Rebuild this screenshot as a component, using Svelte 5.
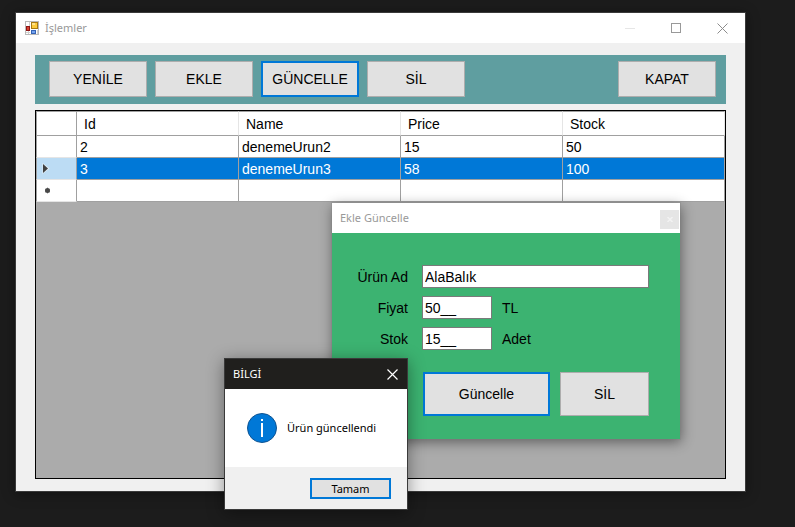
<script>
  const columns = ['Id', 'Name', 'Price', 'Stock'];
  const rows = [
    { id: 2, cells: ['2', 'denemeUrun2', '15', '50'] },
    { id: 3, cells: ['3', 'denemeUrun3', '58', '100'] }
  ];
  let selected = $state(3);
  let name = $state('AlaBalık');
  let price = $state('50__');
  let stock = $state('15__');
</script>

<div class="desktop">
  <main class="window">
    <header class="titlebar">
      <svg class="app-icon" width="14" height="14" viewBox="0 0 14 14" shape-rendering="crispEdges" aria-hidden="true">
        <rect x="0.5" y="0.5" width="13" height="13" fill="#fff" stroke="#b9b9b9" />
        <path d="M3.500 10v3M1 11.500h4M12.500 9v4M4.500 1v4" stroke="#d0d0d0" fill="none" />
        <rect x="6" y="1" width="7" height="7" fill="#a87a10" />
        <rect x="7" y="2" width="5" height="5" fill="#fccb3c" />
        <rect x="7" y="2" width="3" height="2" fill="#ffe38a" />
        <rect x="1" y="5" width="4" height="5" fill="#8e1616" />
        <rect x="2" y="6" width="2" height="3" fill="#d9402e" />
        <rect x="6" y="9" width="5" height="4" fill="#3563b5" />
        <rect x="7" y="10" width="3" height="2" fill="#74a4f0" />
      </svg>
      <h1>İşlemler</h1>
      <div class="caption-buttons">
        <button aria-label="Simge durumuna küçült">
          <svg width="10" height="10" viewBox="0 0 10 10"><path d="M0 5.500h10" stroke="#e6e6e6" /></svg>
        </button>
        <button aria-label="Ekranı kapla">
          <svg width="10" height="10" viewBox="0 0 10 10"><rect x="0.5" y="0.5" width="9" height="9" fill="none" stroke="#999" /></svg>
        </button>
        <button aria-label="Kapat">
          <svg width="11" height="11" viewBox="0 0 11 11"><path d="M0.500 0.500l10 10M10.500 0.500l-10 10" stroke="#8c8c8c" /></svg>
        </button>
      </div>
    </header>

    <div class="content">
      <nav class="toolbar">
        <button class="btn">YENİLE</button>
        <button class="btn">EKLE</button>
        <button class="btn active">GÜNCELLE</button>
        <button class="btn">SİL</button>
        <button class="btn last">KAPAT</button>
      </nav>

      <div class="grid">
        <table>
          <thead>
            <tr>
              <th class="marker"></th>
              {#each columns as column}
                <th>{column}</th>
              {/each}
            </tr>
          </thead>
          <tbody>
            {#each rows as row (row.id)}
              <tr class:selected={row.id === selected} onclick={() => (selected = row.id)}>
                <td class="marker">
                  {#if row.id === selected}
                    <svg width="8" height="11" viewBox="0 0 8 11"><path d="M0.500 0v11l7-5.500z" fill="#e4eef6" /><path d="M1 1v9l5-4.500z" fill="#404040" /></svg>
                  {/if}
                </td>
                {#each row.cells as cell}
                  <td>{cell}</td>
                {/each}
              </tr>
            {/each}
            <tr>
              <td class="marker">
                <svg class="new-row" width="7" height="7" viewBox="0 0 7 7"><path d="M3.500 0.500v6M1 2l5 3M6 2l-5 3" stroke="#999" /><circle cx="3.500" cy="3.500" r="2.500" fill="#484848" /></svg>
              </td>
              {#each columns as column}
                <td></td>
              {/each}
            </tr>
          </tbody>
        </table>
      </div>
    </div>
  </main>

  <section class="editor" aria-labelledby="editor-title">
    <header class="titlebar">
      <h2 id="editor-title">Ekle Güncelle</h2>
      <button class="tool-close" aria-label="Kapat">
        <svg width="6" height="5" viewBox="0 0 6 5"><path d="M0.500 0l5 5M5.500 0l-5 5" stroke="#f2f2f2" stroke-width="1.500" /></svg>
      </button>
    </header>
    <form onsubmit={(e) => e.preventDefault()}>
      <div class="field">
        <label for="name">Ürün Ad</label>
        <input id="name" class="wide" bind:value={name} />
      </div>
      <div class="field">
        <label for="price">Fiyat</label>
        <input id="price" bind:value={price} />
        <span>TL</span>
      </div>
      <div class="field">
        <label for="stock">Stok</label>
        <input id="stock" bind:value={stock} />
        <span>Adet</span>
      </div>
      <div class="actions">
        <button class="btn active update">Güncelle</button>
        <button class="btn remove" type="button">SİL</button>
      </div>
    </form>
  </section>

  <section class="message" role="alertdialog" aria-labelledby="message-title" aria-describedby="message-text">
    <header class="titlebar dark">
      <h2 id="message-title">BİLGİ</h2>
      <button class="message-close" aria-label="Kapat">
        <svg width="11" height="11" viewBox="0 0 11 11"><path d="M0.500 0.500l10 10M10.500 0.500l-10 10" stroke="#fff" stroke-width="1.200" /></svg>
      </button>
    </header>
    <div class="message-body">
      <svg width="30" height="30" viewBox="0 0 30 30" aria-hidden="true">
        <circle cx="15" cy="15" r="14.500" fill="#0078d7" stroke="#0f5391" />
        <rect x="14" y="6" width="2" height="2" fill="#fff" />
        <rect x="14" y="10" width="2" height="14" fill="#fff" />
      </svg>
      <p id="message-text">Ürün güncellendi</p>
    </div>
    <footer>
      <button class="btn active ok">Tamam</button>
    </footer>
  </section>
</div>

<style>
  :global(body) {
    margin: 0;
    background: #1c1c1c;
  }
  .desktop {
    position: relative;
    display: flex;
    box-sizing: border-box;
    min-height: 100vh;
    padding: 12px 49px 35px 15px;
    background: #1c1c1c;
    font: 14px/20px 'Liberation Sans', Arial, sans-serif;
    color: #000;
  }
  button,
  input {
    box-sizing: border-box;
    margin: 0;
    font: inherit;
    color: inherit;
  }
  svg {
    display: block;
  }
  h1,
  h2,
  p,
  .ok {
    margin: 0;
    font: 11px/16px 'Noto Sans', 'Open Sans', sans-serif;
    white-space: nowrap;
  }
  .window {
    flex: 1;
    display: flex;
    flex-direction: column;
    border: 1px solid #3a3a3a;
    background: #f0f0f0;
    box-shadow: 0 2px 12px rgba(0, 0, 0, 0.4);
  }
  .titlebar {
    display: flex;
    align-items: center;
    height: 30px;
    padding-left: 8px;
    background: #fff;
    color: #999;
  }
  .window > .titlebar {
    gap: 6px;
    padding-left: 9px;
  }
  .caption-buttons {
    display: flex;
    margin-left: auto;
  }
  .caption-buttons button {
    display: grid;
    place-items: center;
    width: 46px;
    height: 28px;
    padding: 0;
    border: 0;
    background: none;
  }
  .content {
    flex: 1;
    display: flex;
    flex-direction: column;
    gap: 6px;
    padding: 12px 19px;
  }
  .toolbar {
    display: flex;
    gap: 8px;
    padding: 6px 10px 7px 14px;
    background: #5f9ea0;
  }
  .btn {
    width: 98px;
    height: 36px;
    padding: 0;
    border: 1px solid #adadad;
    border-radius: 0;
    background: #e1e1e1;
  }
  .btn.active {
    border: 2px solid #0078d7;
  }
  .last {
    margin-left: auto;
  }
  .grid {
    flex: 1;
    border: 1px solid #000;
    background: #ababab;
  }
  table {
    width: 100%;
    table-layout: fixed;
    border-collapse: separate;
    border-spacing: 0;
    background: #fff;
  }
  th,
  td {
    box-sizing: border-box;
    height: 22px;
    padding: 0 3px;
    border: solid #a0a0a0;
    border-width: 0 1px 1px 0;
    text-align: left;
    font-weight: normal;
  }
  th {
    height: 25px;
    padding: 0 7px;
    border-top-width: 1px;
    border-right-color: #e5e5e5;
  }
  .marker {
    width: 41px;
    padding: 0 0 0 5px;
    border-left-width: 1px;
    border-right-color: #a0a0a0;
  }
  td.marker {
    border-bottom-color: #e5e5e5;
  }
  .new-row {
    margin-left: 2px;
  }
  .selected td {
    background: #0078d7;
    color: #fff;
  }
  .selected .marker {
    background: #bcdcf4;
  }
  .editor {
    position: absolute;
    left: 332px;
    top: 203px;
    width: 348px;
    background: #3cb371;
    box-shadow: 0 0 0 1px rgba(130, 130, 130, 0.3), 1px 3px 12px rgba(0, 0, 0, 0.45);
  }
  .tool-close {
    display: grid;
    place-items: center;
    width: 19px;
    height: 19px;
    margin: 3px 1px 0 auto;
    padding: 0;
    border: 0;
    background: #e5e5e5;
  }
  form {
    display: flex;
    flex-direction: column;
    gap: 8px;
    padding: 32px 31px 23px 0;
  }
  .field {
    display: flex;
    align-items: center;
  }
  label {
    width: 76px;
    margin-right: 14px;
    text-align: right;
  }
  input {
    width: 70px;
    height: 23px;
    padding: 0 2px;
    border: 1px solid #7a7a7a;
    border-radius: 0;
    background: #fff;
    outline: none;
  }
  .wide {
    flex: 1;
  }
  .field span {
    margin-left: 10px;
  }
  .actions {
    display: flex;
    justify-content: flex-end;
    gap: 10px;
    margin-top: 14px;
  }
  .update {
    width: 127px;
    height: 44px;
  }
  .remove {
    width: 89px;
    height: 44px;
  }
  .message {
    position: absolute;
    left: 224px;
    top: 358px;
    width: 182px;
    border: 1px solid #3a3a3a;
    background: #fff;
    box-shadow: 0 3px 16px rgba(0, 0, 0, 0.4);
  }
  .dark {
    background: #201f1d;
    color: #fff;
  }
  .message-close {
    margin-left: auto;
    padding: 9px;
    border: 0;
    background: none;
  }
  .message-body {
    display: flex;
    align-items: center;
    gap: 10px;
    height: 78px;
    padding-left: 22px;
  }
  footer {
    display: flex;
    justify-content: flex-end;
    padding: 11px 16px 10px;
    background: #f0f0f0;
  }
  .ok {
    width: 81px;
    height: 21px;
  }
</style>
